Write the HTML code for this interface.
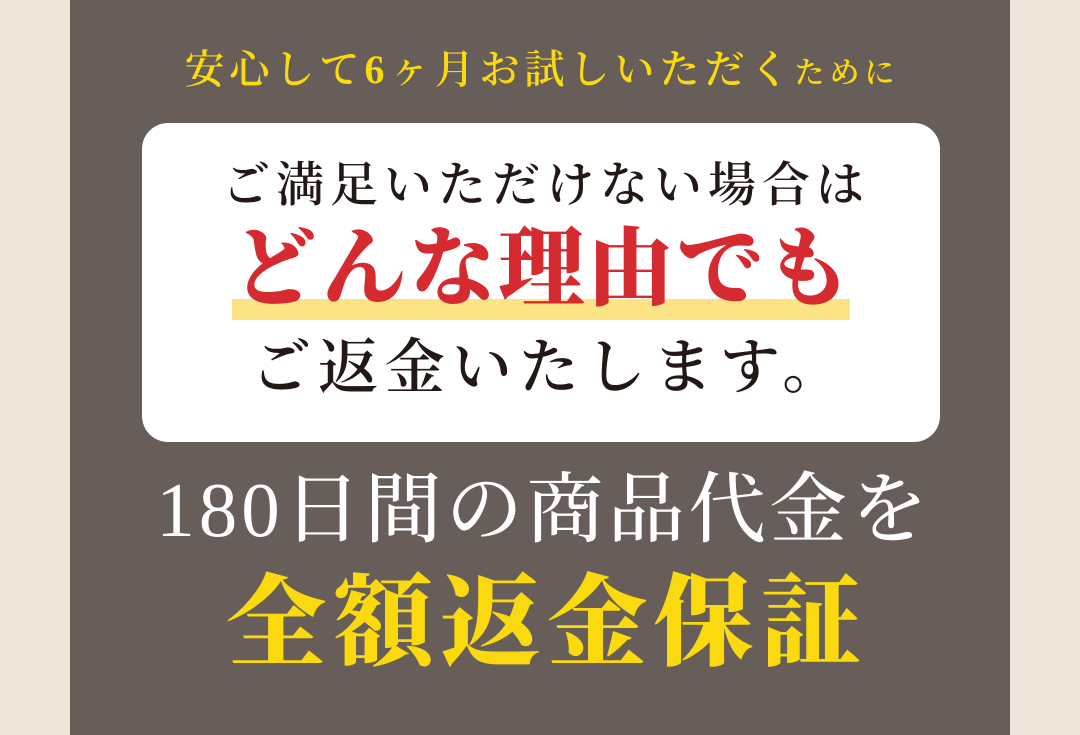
<!DOCTYPE html>
<html><head><meta charset="utf-8"><style>
html,body{margin:0;padding:0}
body{width:1080px;height:735px;background:#efe6dc;position:relative;overflow:hidden;font-family:"Liberation Serif","Noto Serif CJK JP","Noto Serif CJK SC",serif}
.panel{position:absolute;left:70px;top:0;width:940px;height:735px;background:#675d59}
.t{position:absolute;left:0;width:1080px;text-align:center;white-space:nowrap;line-height:1}
.box{position:absolute;left:142px;top:123px;width:798px;height:319px;background:#fff;border-radius:26px}
.hl{position:absolute;left:232px;top:299px;width:618px;height:21px;background:#fce384}
</style></head><body>
<div class="panel"></div>
<div class="t" style="top:50px;font-size:40px;color:#fada0e;font-weight:600;letter-spacing:5px;padding-left:2px">安心して6ヶ月お試しいただく<span style="font-size:30px">ために</span></div>
<div class="box"></div>
<div class="hl"></div>
<div class="t" style="top:162px;font-size:48px;color:#231815;font-weight:600;letter-spacing:6px;padding-left:6px">ご満足いただけない場合は</div>
<div class="t" style="top:226px;font-size:86px;color:#d52a2f;font-weight:900;letter-spacing:3px;padding-left:3px">どんな理由でも</div>
<div class="t" style="top:338px;font-size:60px;color:#231815;font-weight:600;letter-spacing:7px;padding-left:10px">ご返金いたします。</div>
<div class="t" style="top:472px;font-size:77px;color:#fff;font-weight:500;letter-spacing:4px;padding-left:4px">180日間の商品代金を</div>
<div class="t" style="top:574px;font-size:100px;color:#fada0e;font-weight:900;letter-spacing:7px;padding-left:7px">全額返金保証</div>
</body></html>
